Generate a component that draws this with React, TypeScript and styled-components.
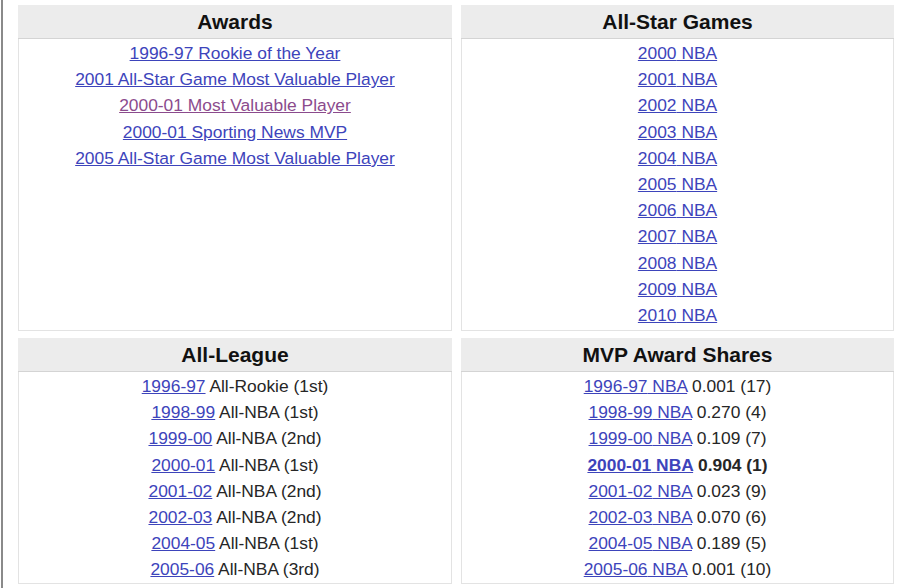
import React from "react";
import styled, { createGlobalStyle } from "styled-components";

const Global = createGlobalStyle`
  html, body { margin: 0; padding: 0; background: #fff; }
  body { font-family: "Liberation Sans", Arial, sans-serif; }
`;

const Page = styled.div`
  width: 900px;
  height: 588px;
  box-sizing: border-box;
  margin-left: 1px;
  border-left: 2px solid #8a8a8a;
  padding: 5px 0 0 15px;
`;

const Grid = styled.div`
  display: grid;
  grid-template-columns: 434px 433px;
  grid-template-rows: 326px 246px;
  column-gap: 9px;
  row-gap: 7px;
`;

const Box = styled.section`
  border: 1px solid #e3e3e3;
  border-top: none;
  background: #fff;
  display: flex;
  flex-direction: column;
`;

const Header = styled.h2`
  margin: 0 -1px;
  height: 34px;
  background: #ececec;
  border-bottom: 1px solid #d4d4d4;
  font-size: 21px;
  font-weight: bold;
  color: #111;
  display: flex;
  align-items: center;
  justify-content: center;
  padding-top: 1px;
  box-sizing: border-box;
`;

const List = styled.ul`
  list-style: none;
  margin: 0;
  padding: 1px 0 0;
`;

const Item = styled.li<{ $bold?: boolean }>`
  text-align: center;
  font-size: 17.4px;
  line-height: 26.2px;
  color: #262626;
  font-weight: ${(p) => (p.$bold ? "bold" : "normal")};
`;

const Link = styled.a<{ $visited?: boolean }>`
  color: ${(p) => (p.$visited ? "#8b4b8d" : "#3d44bb")};
  text-decoration: underline;
  cursor: pointer;
`;

const awards = [
  "1996-97 Rookie of the Year",
  "2001 All-Star Game Most Valuable Player",
  "2000-01 Most Valuable Player",
  "2000-01 Sporting News MVP",
  "2005 All-Star Game Most Valuable Player",
];

const allStar = ["2000", "2001", "2002", "2003", "2004", "2005", "2006", "2007", "2008", "2009", "2010"];

const allLeague: [string, string][] = [
  ["1996-97", "All-Rookie (1st)"],
  ["1998-99", "All-NBA (1st)"],
  ["1999-00", "All-NBA (2nd)"],
  ["2000-01", "All-NBA (1st)"],
  ["2001-02", "All-NBA (2nd)"],
  ["2002-03", "All-NBA (2nd)"],
  ["2004-05", "All-NBA (1st)"],
  ["2005-06", "All-NBA (3rd)"],
];

const mvp: [string, string, boolean?][] = [
  ["1996-97", "0.001 (17)"],
  ["1998-99", "0.270 (4)"],
  ["1999-00", "0.109 (7)"],
  ["2000-01", "0.904 (1)", true],
  ["2001-02", "0.023 (9)"],
  ["2002-03", "0.070 (6)"],
  ["2004-05", "0.189 (5)"],
  ["2005-06", "0.001 (10)"],
];

export default function App() {
  return (
    <>
      <Global />
      <Page>
        <Grid>
          <Box>
            <Header>Awards</Header>
            <List>
              {awards.map((a, i) => (
                <Item key={a}>
                  <Link $visited={i === 2}>{a}</Link>
                </Item>
              ))}
            </List>
          </Box>
          <Box>
            <Header>All-Star Games</Header>
            <List>
              {allStar.map((y) => (
                <Item key={y}>
                  <Link>{y} NBA</Link>
                </Item>
              ))}
            </List>
          </Box>
          <Box>
            <Header>All-League</Header>
            <List>
              {allLeague.map(([s, t]) => (
                <Item key={s}>
                  <Link>{s}</Link> {t}
                </Item>
              ))}
            </List>
          </Box>
          <Box>
            <Header>MVP Award Shares</Header>
            <List>
              {mvp.map(([s, v, b]) => (
                <Item key={s} $bold={b}>
                  <Link>{s} NBA</Link> {v}
                </Item>
              ))}
            </List>
          </Box>
        </Grid>
      </Page>
    </>
  );
}
